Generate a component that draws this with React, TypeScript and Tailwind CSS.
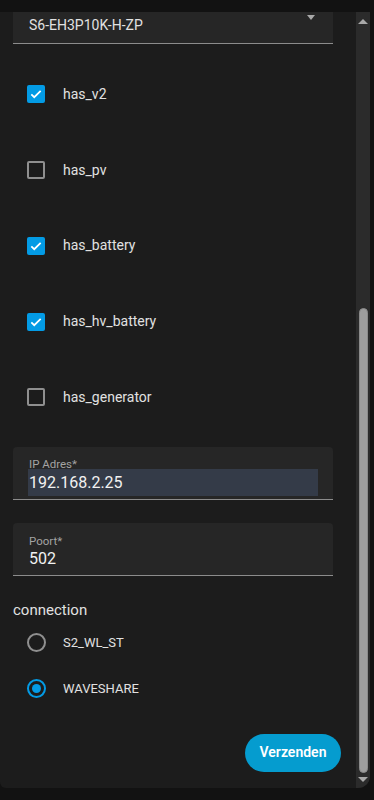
import { useState } from 'react'

const FLAGS: Array<{ name: string; checked: boolean }> = [
  { name: 'has_v2', checked: true },
  { name: 'has_pv', checked: false },
  { name: 'has_battery', checked: true },
  { name: 'has_hv_battery', checked: true },
  { name: 'has_generator', checked: false },
]

const CONNECTIONS = ['S2_WL_ST', 'WAVESHARE']

function CheckBox({ checked }: { checked: boolean }) {
  if (!checked) {
    return <div className="w-[18px] h-[18px] rounded-[2px] border-2 border-[#8f8f8f]" />
  }
  return (
    <div className="w-[18px] h-[18px] rounded-[2px] bg-[#039be5] flex items-center justify-center">
      <svg width="14" height="14" viewBox="0 0 24 24">
        <path d="M4 12.5l5 5L20 6.5" fill="none" stroke="#fff" strokeWidth="3" />
      </svg>
    </div>
  )
}

function Radio({ checked }: { checked: boolean }) {
  return (
    <div
      className={`w-[19px] h-[19px] rounded-full border-2 flex items-center justify-center ${
        checked ? 'border-[#039be5]' : 'border-[#8f8f8f]'
      }`}
    >
      {checked && <div className="w-[9px] h-[9px] rounded-full bg-[#039be5]" />}
    </div>
  )
}

export default function App() {
  const [flags, setFlags] = useState(FLAGS)
  const [conn, setConn] = useState('WAVESHARE')

  return (
    <div className="w-[374px] h-[800px] bg-[#121212] overflow-hidden font-['Roboto',sans-serif]">
      <div className="mt-[12px] w-[370px] h-[776px] bg-[#1c1c1c] rounded-br-[12px] rounded-bl-[6px] overflow-hidden flex">
        {/* Form */}
        <div className="w-[356px] pl-[13px] flex flex-col">
          {/* Model select (scrolled, top cut off) */}
          <div className="w-[320px] h-[32px] bg-[#262626] border-b border-[#8c8c8c] relative pl-[16px]">
            <span className="block text-[14px] leading-[26px] text-[#e1e1e1]">S6-EH3P10K-H-ZP</span>
            <div className="absolute right-[18px] top-[3px] w-0 h-0 border-l-[4.5px] border-r-[4.5px] border-t-[5px] border-l-transparent border-r-transparent border-t-[#a8a8a8]" />
          </div>

          {/* Flags */}
          <div className="mt-[12.5px]">
            {flags.map((f, i) => (
              <div
                key={f.name}
                className="h-[75.75px] flex items-center cursor-pointer"
                onClick={() =>
                  setFlags(flags.map((x, j) => (j === i ? { ...x, checked: !x.checked } : x)))
                }
              >
                <div className="ml-[14px] w-[18px]">
                  <CheckBox checked={f.checked} />
                </div>
                <span className="ml-[18px] text-[14px] text-[#e1e1e1]">{f.name}</span>
              </div>
            ))}
          </div>

          {/* IP */}
          <div className="mt-[11.5px] w-[320px] h-[53px] bg-[#262626] rounded-t-[4px] border-b border-[#8c8c8c] px-[15px] pt-[13px]">
            <div className="text-[11.5px] leading-[8px] text-[#a3a3a3] pl-[1px]">IP Adres*</div>
            <div className="mt-[1px] h-[27px] bg-[#343b48] pl-[1px] text-[16px] leading-[27px] text-[#f1f1f1]">
              192.168.2.25
            </div>
          </div>

          {/* Poort */}
          <div className="mt-[23px] w-[320px] h-[53px] bg-[#262626] rounded-t-[4px] border-b border-[#8c8c8c] px-[16px] pt-[12px]">
            <div className="text-[11.5px] leading-[12px] text-[#a3a3a3]">Poort*</div>
            <div className="mt-[3px] text-[16px] leading-[18px] text-[#f1f1f1]">502</div>
          </div>

          {/* Connection */}
          <div className="mt-[24px] text-[15px] leading-[20px] text-[#e1e1e1]">connection</div>
          <div>
            {CONNECTIONS.map((c) => (
              <div
                key={c}
                className="h-[46px] flex items-center cursor-pointer"
                onClick={() => setConn(c)}
              >
                <div className="ml-[14px]">
                  <Radio checked={conn === c} />
                </div>
                <span className="ml-[17px] text-[13px] text-[#e1e1e1]">{c}</span>
              </div>
            ))}
          </div>

          <div className="mt-[22px] flex justify-end pr-[15px]">
            <button className="w-[96px] h-[38px] rounded-full bg-[#059ccf] text-white text-[14px] font-semibold">
              Verzenden
            </button>
          </div>
        </div>

        {/* Scrollbar */}
        <div className="w-[14px] h-full bg-[#2b2b2b] flex flex-col items-center">
          <div className="mt-[7px] w-0 h-0 border-l-[5px] border-r-[5px] border-b-[5px] border-l-transparent border-r-transparent border-b-[#a8a8a8]" />
          <div className="mt-[284px] w-[9px] h-[465px] rounded-full bg-[#9e9e9e] border border-[#8a8a8a]" />
          <div className="mt-[4px] w-0 h-0 border-l-[5px] border-r-[5px] border-t-[5px] border-l-transparent border-r-transparent border-t-[#a8a8a8]" />
        </div>
      </div>
    </div>
  )
}
